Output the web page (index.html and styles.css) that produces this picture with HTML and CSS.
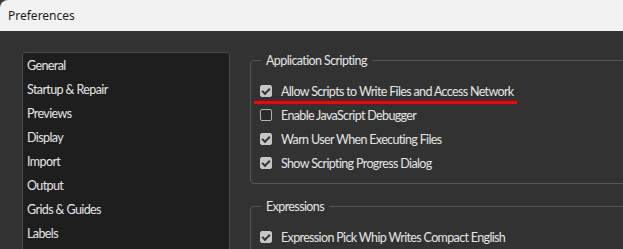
FILE: index.html
```html
<!DOCTYPE html>
<html lang="en">

<head>
  <meta charset="UTF-8" />
  <title>Preferences</title>
  <link rel="stylesheet" href="styles.css">
</head>

<body>
  <div class="janela">

    <div class="titulo">Preferences</div>

    <div class="conteudo">

      <!-- lista de categorias -->
      <ul class="categorias">
        <li>General</li>
        <li>Startup &amp; Repair</li>
        <li>Previews</li>
        <li>Display</li>
        <li>Import</li>
        <li>Output</li>
        <li>Grids &amp; Guides</li>
        <li>Labels</li>
      </ul>

      <div class="opcoes">
        <fieldset class="grupo">
          <legend>Application Scripting</legend>
          <label class="linha destaque"><span class="caixa marcada"></span>Allow Scripts to Write Files and Access Network</label>
          <label class="linha"><span class="caixa"></span>Enable JavaScript Debugger</label>
          <label class="linha"><span class="caixa marcada"></span>Warn User When Executing Files</label>
          <label class="linha"><span class="caixa marcada"></span>Show Scripting Progress Dialog</label>
        </fieldset>

        <fieldset class="grupo">
          <legend>Expressions</legend>
          <label class="linha"><span class="caixa marcada"></span>Expression Pick Whip Writes Compact English</label>
        </fieldset>
      </div>

    </div>
  </div>
</body>

</html>
```

FILE: styles.css
```css
body {
  margin: 0;
  padding: 0;
  background: #3a3a3a;
  font-family: Lato, "Open Sans", sans-serif;
  overflow: hidden;
}

.janela {
  background: #323232;
  height: 249px;
  border-radius: 8px 0 0 0;
  overflow: hidden;
}

.titulo {
  height: 31px;
  background: #f2f2f2;
  color: #1a1a1a;
  font-family: "Noto Sans", sans-serif;
  font-size: 12px;
  line-height: 31px;
  padding-left: 8px;
}

.conteudo {
  display: flex;
  gap: 20px;
  padding: 21px 0 0 22px;
}

.categorias {
  list-style: none;
  margin: 0;
  padding: 1px 0 0 0;
  width: 206px;
  height: 220px;
  flex-shrink: 0;
  background: #1e1e1e;
  border: 1px solid #4a4a4a;
  border-radius: 3px;
}

.categorias li {
  height: 24px;
  line-height: 24px;
  padding-left: 4px;
  font-size: 12.5px;
  letter-spacing: -0.6px;
  color: #e6e6e6;
}

.opcoes {
  flex: 1;
  display: flex;
  flex-direction: column;
  gap: 15px;
  margin-top: 1px;
  margin-right: -10px;
}

.grupo {
  margin: 0;
  padding: 11px 0 8px 9px;
  border: 1px solid #555;
  border-radius: 4px;
}

.grupo legend {
  padding: 0 5px;
  margin-left: 1px;
  font-size: 12.5px;
  letter-spacing: -0.6px;
  color: #e6e6e6;
}

.linha {
  position: relative;
  display: flex;
  align-items: center;
  gap: 9px;
  height: 24px;
  font-size: 12.5px;
  letter-spacing: -0.65px;
  color: #e6e6e6;
}

.caixa {
  width: 12px;
  height: 12px;
  box-sizing: border-box;
  border: 1.5px solid #b4b4b4;
  border-radius: 2px;
  background: #2a2a2a;
  display: flex;
  align-items: center;
  justify-content: center;
}

.caixa.marcada {
  background: #c6c6c6;
  border-color: #c6c6c6;
}

.caixa.marcada::after {
  content: "";
  width: 6px;
  height: 3px;
  border-left: 2px solid #333;
  border-bottom: 2px solid #333;
  transform: translateY(-1px) rotate(-45deg);
}

/* sublinhado vermelho por cima */
.destaque::after {
  content: "";
  position: absolute;
  left: -6px;
  bottom: -1px;
  width: 263px;
  height: 3px;
  background: #f00;
}
```
